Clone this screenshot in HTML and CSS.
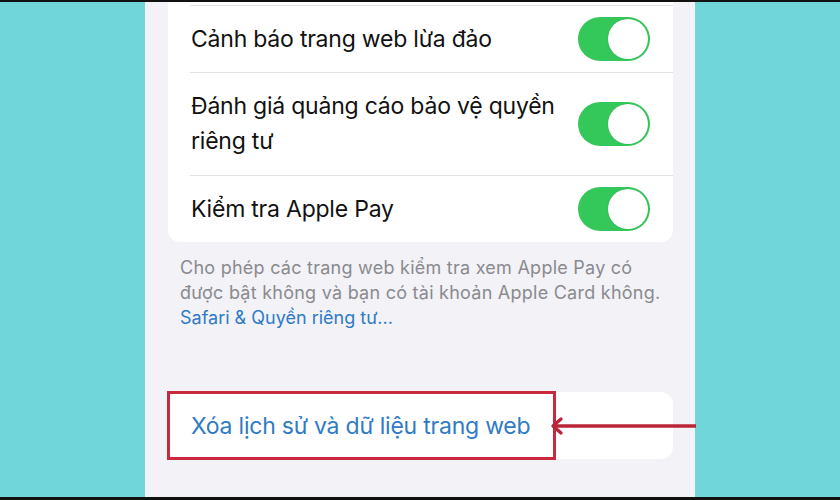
FILE: index.html
```html
<!DOCTYPE html>
<html lang="vi">
<head>
<meta charset="utf-8">
<title>Safari</title>
<link rel="stylesheet" href="styles.css">
</head>
<body>
<div class="screen">
  <div class="panel">
    <div class="card card-top">
      <div class="sep first"></div>
      <div class="row">
        <div class="label">Cảnh báo trang web lừa đảo</div>
        <div class="toggle"><span class="knob"></span></div>
      </div>
      <div class="sep"></div>
      <div class="row tall">
        <div class="label">Đánh giá quảng cáo bảo vệ quyền riêng tư</div>
        <div class="toggle"><span class="knob"></span></div>
      </div>
      <div class="sep"></div>
      <div class="row">
        <div class="label">Kiểm tra Apple Pay</div>
        <div class="toggle"><span class="knob"></span></div>
      </div>
    </div>
    <p class="footnote">Cho phép các trang web kiểm tra xem Apple Pay có được bật không và bạn có tài khoản Apple Card không.<br><span class="link">Safari &amp; Quyền riêng tư...</span></p>
    <div class="card card-action">
      <div class="action">Xóa lịch sử và dữ liệu trang web</div>
      <div class="highlight"></div>
      <svg class="arrow" width="146" height="20" viewBox="0 0 146 20">
        <line x1="3" y1="10" x2="146" y2="10" stroke="#b9263a" stroke-width="3.4"/>
        <polyline points="11,3 3,10 11,17" fill="none" stroke="#b9263a" stroke-width="3.4" stroke-linecap="round" stroke-linejoin="round"/>
      </svg>
    </div>
  </div>
</div>
</body>
</html>
```
FILE: styles.css
```css
html, body {
  margin: 0;
  padding: 0;
}
body {
  width: 840px;
  height: 500px;
  overflow: hidden;
  background: #111;
  font-family: Inter, "Noto Sans", sans-serif;
}
.screen {
  height: 495px;
  margin-top: 2px;
  background: #71d6da;
  display: flex;
  padding-left: 145px;
}
.panel {
  width: 550px;
  background: #f2f2f7;
  padding: 0 22px 0 23px;
  box-sizing: border-box;
  display: flex;
  flex-direction: column;
}
.card {
  background: #fff;
  border-radius: 12px;
}
.card-top {
  border-top-left-radius: 0;
  border-top-right-radius: 0;
  padding-top: 3px;
}
.sep {
  height: 1px;
  background: #e2e2e6;
  margin-left: 22px;
}
.row {
  height: 66px;
  display: flex;
  align-items: center;
  padding: 0 23px 0 23px;
}
.row.tall {
  height: 102px;
}
.label {
  flex: 1;
  font-size: 23px;
  line-height: 35px;
  color: #111;
  padding-right: 14px;
  letter-spacing: -0.22px;
}
.toggle {
  width: 72px;
  height: 44px;
  border-radius: 22px;
  background: #34c759;
  position: relative;
  flex: none;
}
.knob {
  position: absolute;
  right: 2px;
  top: 2px;
  width: 40px;
  height: 40px;
  border-radius: 50%;
  background: #fff;
  box-shadow: 0 0 1px rgba(0, 0, 0, 0.25);
}
.footnote {
  margin: 13px 0 0 0;
  padding: 0 0 0 12px;
  font-size: 18px;
  line-height: 25px;
  letter-spacing: 0.25px;
  color: #8a8a8f;
}
.link {
  color: #2f7bc4;
  letter-spacing: 0;
}
.card-action {
  margin-top: 62px;
  height: 67px;
  position: relative;
  display: flex;
  align-items: center;
  padding: 0 23px;
}
.action {
  font-size: 23px;
  color: #2f7bc4;
  letter-spacing: -0.22px;
}
.highlight {
  position: absolute;
  left: -1px;
  top: -1px;
  width: 389px;
  height: 69px;
  box-sizing: border-box;
  border: 3px solid #c9283e;
}
.arrow {
  position: absolute;
  left: 382px;
  top: 24px;
}
```
